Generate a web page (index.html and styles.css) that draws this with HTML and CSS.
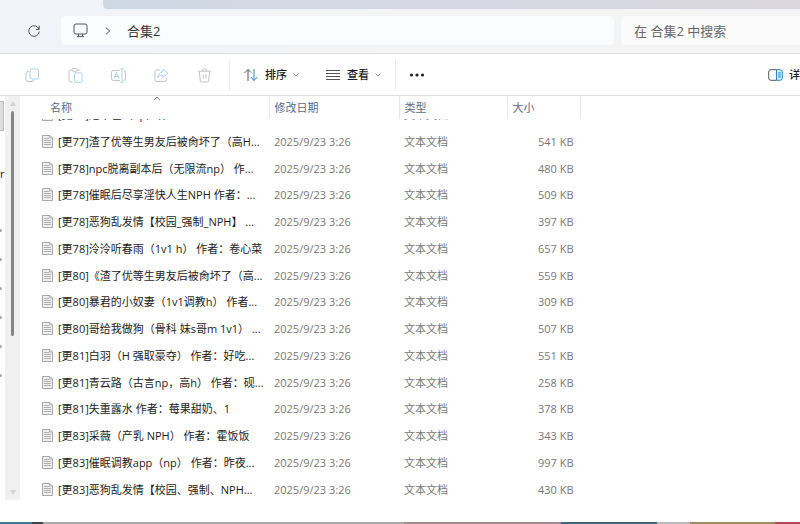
FILE: index.html
```html
<!DOCTYPE html>
<html lang="zh-CN">
<head>
<meta charset="utf-8">
<title>合集2</title>
<link rel="stylesheet" href="styles.css">
</head>
<body>
<div class="window">
  <div class="tabs"><div class="tab-strip"></div></div>
  <header class="nav">
    <button class="icon-btn refresh" aria-label="刷新">
      <svg width="14" height="14" viewBox="0 0 14 14"><path d="M12 5.2A5.3 5.3 0 1 0 12.3 7.6M12.2 1.8v3.6H8.8"/></svg>
    </button>
    <nav class="address" aria-label="地址">
      <svg width="15" height="15" viewBox="0 0 15 15"><rect x="1" y="1" width="13" height="10" rx="2"/><path d="M5.5 11v2.5M9.5 11v2.5M4 13.6h7"/></svg>
      <svg class="crumb" width="6" height="8" viewBox="0 0 6 8"><path d="M1 .7 4.7 4 1 7.3"/></svg>
      <a href="#">合集2</a>
    </nav>
    <input class="search" type="text" aria-label="搜索" placeholder="在 合集2 中搜索">
  </header>
  <div class="toolbar">
    <div class="group clipboard">
      <button class="icon-btn" aria-label="复制" disabled><svg width="15" height="15" viewBox="0 0 15 15"><path class="gray" d="M4 3.5H3a2 2 0 0 0-2 2v6a2 2 0 0 0 2 2h4a2 2 0 0 0 2-1.5"/><rect class="sky" x="5" y="1" width="8.500" height="10" rx="2"/></svg></button>
      <button class="icon-btn" aria-label="粘贴" disabled><svg width="15" height="15" viewBox="0 0 15 15"><path class="gray" d="M4.500 2H2.500A1.500 1.500 0 0 0 1 3.500v9A1.500 1.500 0 0 0 2.500 14H5M9.500 2h1.500a1 1 0 0 1 1 1"/><rect class="gray" x="4" y=".6" width="5.500" height="2.600" rx="1"/><rect class="sky" x="6.500" y="4.800" width="7.500" height="9.500" rx="1.500"/></svg></button>
      <button class="icon-btn" aria-label="重命名" disabled><svg width="15" height="15" viewBox="0 0 15 15"><path class="gray" d="M9 2.500H2.500a2 2 0 0 0-2 2v6a2 2 0 0 0 2 2H9M12.500 2.500a2 2 0 0 1 2 2v6a2 2 0 0 1-2 2"/><path class="sky" d="M3 10.500 5.500 4.500 8 10.500M4 8.500h3M9.500 .7h3M9.500 14.300h3M11 .7v13.600"/></svg></button>
      <button class="icon-btn" aria-label="共享" disabled><svg width="15" height="15" viewBox="0 0 15 15"><path class="gray" d="M6 2H3a2 2 0 0 0-2 2v7.500a2 2 0 0 0 2 2h7.500a2 2 0 0 0 2-2V10"/><path class="sky" d="M9 1.200 14 5.200 9 9.200V7C6.500 7 5 8 3.800 10 4 6.500 6 4 9 3.500Z"/></svg></button>
      <button class="icon-btn" aria-label="删除" disabled><svg width="15" height="15" viewBox="0 0 15 15"><path class="gray" d="M1 3.200h13M5.300 3a2.200 2.200 0 0 1 4.400 0M2.300 3.500 3.300 12.500a1.500 1.500 0 0 0 1.500 1.500h5.400a1.500 1.500 0 0 0 1.500-1.500L12.700 3.500M6.200 6.300v4.500M8.800 6.300v4.500"/></svg></button>
    </div>
    <div class="group menus">
      <button class="menu-btn"><svg width="16" height="14" viewBox="0 0 16 14"><path d="M5 13V1.500M1.500 5 5 1.500 8 4.500"/><path class="blue" d="M11 1v11.500M7.800 9 11 12.500 14.500 9"/></svg><span>排序</span><svg class="caret" width="6" height="4" viewBox="0 0 6 4"><path d="M.5 .5 3 3 5.500 .5"/></svg></button>
      <button class="menu-btn view"><svg width="16" height="12" viewBox="0 0 16 12"><path d="M1 1.500h14M1 4.500h14M1 7.500h14M1 10.500h14"/></svg><span>查看</span><svg class="caret" width="6" height="4" viewBox="0 0 6 4"><path d="M.5 .5 3 3 5.500 .5"/></svg></button>
    </div>
    <button class="icon-btn more" aria-label="更多"><svg width="16" height="4" viewBox="0 0 16 4"><circle cx="2.500" cy="2" r="1.600"/><circle cx="8" cy="2" r="1.600"/><circle cx="13.500" cy="2" r="1.600"/></svg></button>
    <button class="menu-btn details"><svg width="15" height="12" viewBox="0 0 15 12"><path d="M8.500 .7H3A2.300 2.300 0 0 0 .7 3v6A2.300 2.300 0 0 0 3 11.300h5.500"/><path class="blue pane" d="M8.500 .7H12A2.300 2.300 0 0 1 14.300 3v6a2.300 2.300 0 0 1-2.300 2.300H8.500Z"/><path class="blue" d="M10 4h3M10 6h3M10 8h3"/></svg><span>详细信息</span></button>
  </div>
  <main class="content">
    <aside class="sidebar">
      <div class="side-item"></div>
      <div class="side-text">r</div>
      <div class="ticks"><i></i><i></i><i></i><i></i><i></i><i></i></div>
    </aside>
    <div class="scrollbar"><span class="up"></span><span class="thumb"></span><span class="down"></span></div>
    <table class="files">
      <colgroup><col class="c-name"><col class="c-date"><col class="c-type"><col class="c-size"></colgroup>
      <thead><tr><th>名称<svg class="sort" width="8" height="5" viewBox="0 0 8 5"><path d="M1 4 4 1 7 4"/></svg></th><th>修改日期</th><th>类型</th><th>大小</th></tr></thead>
      <tbody>
        <tr class="partial"><td><div><span><svg class="doc" width="11" height="13"><use href="#doc"/></svg>[更77]池中雀（np）作</span></div></td><td><div><span>2025/9/23 3:26</span></div></td><td><div><span>文本文档</span></div></td><td></td></tr>
        <tr><td><svg class="doc" width="11" height="13"><use href="#doc"/></svg>[更77]渣了优等生男友后被肏坏了（高H...</td><td>2025/9/23 3:26</td><td>文本文档</td><td>541 KB</td></tr>
        <tr><td><svg class="doc" width="11" height="13"><use href="#doc"/></svg>[更78]npc脱离副本后（无限流np） 作...</td><td>2025/9/23 3:26</td><td>文本文档</td><td>480 KB</td></tr>
        <tr><td><svg class="doc" width="11" height="13"><use href="#doc"/></svg>[更78]催眠后尽享淫快人生NPH 作者：...</td><td>2025/9/23 3:26</td><td>文本文档</td><td>509 KB</td></tr>
        <tr><td><svg class="doc" width="11" height="13"><use href="#doc"/></svg>[更78]恶狗乱发情【校园_强制_NPH】 ...</td><td>2025/9/23 3:26</td><td>文本文档</td><td>397 KB</td></tr>
        <tr><td><svg class="doc" width="11" height="13"><use href="#doc"/></svg>[更78]泠泠听春雨（1v1 h） 作者：卷心菜</td><td>2025/9/23 3:26</td><td>文本文档</td><td>657 KB</td></tr>
        <tr><td><svg class="doc" width="11" height="13"><use href="#doc"/></svg>[更80]《渣了优等生男友后被肏坏了（高...</td><td>2025/9/23 3:26</td><td>文本文档</td><td>559 KB</td></tr>
        <tr><td><svg class="doc" width="11" height="13"><use href="#doc"/></svg>[更80]暴君的小奴妻（1v1调教h） 作者...</td><td>2025/9/23 3:26</td><td>文本文档</td><td>309 KB</td></tr>
        <tr><td><svg class="doc" width="11" height="13"><use href="#doc"/></svg>[更80]哥给我做狗（骨科 妹s哥m 1v1） ...</td><td>2025/9/23 3:26</td><td>文本文档</td><td>507 KB</td></tr>
        <tr><td><svg class="doc" width="11" height="13"><use href="#doc"/></svg>[更81]白羽（H 强取豪夺） 作者：好吃...</td><td>2025/9/23 3:26</td><td>文本文档</td><td>551 KB</td></tr>
        <tr><td><svg class="doc" width="11" height="13"><use href="#doc"/></svg>[更81]青云路（古言np，高h） 作者：砚...</td><td>2025/9/23 3:26</td><td>文本文档</td><td>258 KB</td></tr>
        <tr><td><svg class="doc" width="11" height="13"><use href="#doc"/></svg>[更81]失重露水 作者：莓果甜奶、1</td><td>2025/9/23 3:26</td><td>文本文档</td><td>378 KB</td></tr>
        <tr><td><svg class="doc" width="11" height="13"><use href="#doc"/></svg>[更83]采薇（产乳 NPH） 作者：霍饭饭</td><td>2025/9/23 3:26</td><td>文本文档</td><td>343 KB</td></tr>
        <tr><td><svg class="doc" width="11" height="13"><use href="#doc"/></svg>[更83]催眠调教app（np） 作者：昨夜...</td><td>2025/9/23 3:26</td><td>文本文档</td><td>997 KB</td></tr>
        <tr><td><svg class="doc" width="11" height="13"><use href="#doc"/></svg>[更83]恶狗乱发情【校园、强制、NPH...</td><td>2025/9/23 3:26</td><td>文本文档</td><td>430 KB</td></tr>
      </tbody>
    </table>
  </main>
  <footer class="desktop-edge"></footer>
</div>
<svg class="defs" width="0" height="0"><symbol id="doc" viewBox="0 0 11 13"><path class="sheet" d="M.5 .5h7.500l2.500 2.500v9.500H.5Z"/><path class="lines" d="M2 3.500h5M2 5.500h7M2 7.500h7M2 9.500h7M7.500 .5V3h3"/></symbol></svg>
</body>
</html>
```
FILE: styles.css
```css
* { box-sizing: border-box; }
body {
  margin: 0;
  background: #fff;
  color: #1c1c1c;
  font: 11px/16px "Open Sans", "Noto Sans CJK SC", sans-serif;
  overflow: hidden;
}
button { border: 0; background: none; padding: 0; font: inherit; color: inherit; }
svg { fill: none; stroke: #555; stroke-width: 1; flex: none; }
.defs { position: absolute; }
.window { display: flex; flex-direction: column; height: 100vh; }

.tabs { background: #f2f3f8; padding-left: 103px; }
.tab-strip {
  height: 9px;
  border-bottom-left-radius: 4px;
  background: linear-gradient(90deg, #ced8e4, #d6d8e3 50%, #d9d6df);
}
.nav {
  display: flex;
  align-items: center;
  height: 45px;
  padding: 0 0 1px 26px;
  background: linear-gradient(90deg, #f1f3f8, #f4f4f6 50%, #f4f4f5);
  border-bottom: 1px solid #dcdee1;
}
.icon-btn { display: flex; align-items: center; justify-content: center; width: 15px; height: 24px; }
.address {
  display: flex;
  align-items: center;
  flex: 1;
  height: 29px;
  margin-left: 20px;
  padding-left: 12px;
  background: #fbfcfd;
  border-radius: 4px;
  font-size: 13px;
}
.address a { color: #333; text-decoration: none; }
.crumb { margin: 0 16px 0 17px; }
.search {
  width: 179px;
  height: 29px;
  margin-left: 7px;
  padding: 0 13px;
  border: 0;
  border-radius: 4px 0 0 4px;
  background: #fbfbfc;
  font: inherit;
  font-size: 13px;
}
.search::placeholder { color: #666; opacity: 1; }

.toolbar {
  display: flex;
  align-items: center;
  height: 42px;
  padding: 1px 0 0 25px;
  border-bottom: 1px solid #dedede;
  overflow: hidden;
}
.group { display: flex; align-items: center; height: 30px; border-right: 1px solid #ebebeb; }
.clipboard { gap: 28px; width: 205px; }
.gray { stroke: #c3c3c3; }
.sky { stroke: #a9d2ef; }
.blue { stroke: #2b86c8; }
.pane { fill: #d9efff; }
.menus { gap: 26px; padding: 0 15px 0 13px; width: 166px; }
.menu-btn { display: flex; align-items: center; gap: 6px; white-space: nowrap; font-weight: 500; }
.caret { stroke: #999; }
.more { width: 16px; margin-left: 13px; }
.more circle { fill: #222; stroke: none; }
.details { margin-left: auto; width: 32px; }

.content { display: flex; flex: 1; min-height: 0; }
.sidebar { width: 5px; overflow: hidden; }
.side-item { height: 30px; margin: 5px 1px 0 0; background: #dedede; border: 1px solid #bbb; border-left: 0; }
.side-text { margin-top: 35px; }
.ticks { display: grid; gap: 26px; margin-top: 47px; }
.ticks i { width: 2px; height: 3px; background: #aaa; border-radius: 0 2px 2px 0; }
.scrollbar {
  display: flex;
  flex-direction: column;
  align-items: center;
  width: 15px;
  margin-bottom: 22px;
  padding: 5px 0;
  background: #f0f0f0;
}
.up, .down { border: 3px solid transparent; }
.up { border-bottom: 5px solid #d2d2d2; border-top: 0; }
.down { border-top: 5px solid #d2d2d2; border-bottom: 0; margin-top: auto; }
.thumb { width: 3px; height: 57%; margin-top: 5px; background: #858585; border-radius: 2px; }

.files { border-collapse: collapse; table-layout: fixed; width: 561px; align-self: flex-start; }
.c-name { width: 249px; }
.c-date { width: 130px; }
.c-type { width: 108px; }
.files th {
  height: 23px;
  padding: 0 0 0 5px;
  border-right: 1px solid #e6e6e6;
  color: #5a6a85;
  font-weight: 400;
  text-align: left;
  position: relative;
}
.files th:first-child { padding-left: 30px; }
.sort { position: absolute; top: 0; left: 133px; stroke: #888; }
.files td { height: 27px; padding: 0 0 0 5px; color: #777; white-space: nowrap; }
.files tr:nth-child(4n) td { height: 26px; }
.files td:first-child { padding-left: 22px; color: #1c1c1c; }
.files td:last-child { padding: 0 7px 0 0; text-align: right; }
.files .partial td { height: 9px; }
.partial div { display: flex; align-items: flex-end; height: 9px; overflow: hidden; }
.partial span { line-height: 27px; }
.doc { margin-right: 5px; vertical-align: -2px; }
.sheet { fill: #efefef; stroke: #a8a8a8; }
.lines { stroke: #b0b0b0; }
.desktop-edge {
  height: 2px;
  background: linear-gradient(90deg, #3f7c93 0 32px, #3c4650 32px 43px, #a9a9a9 43px 404px, #a58a90 404px 561px, #3f667c 561px 657px, #b9b9b9 657px 690px, #a08a60 690px 775px, #b44a55 775px);
}
```
